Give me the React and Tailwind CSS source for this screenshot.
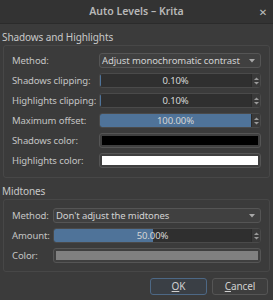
import React from "react";

const font = { fontFamily: '"Noto Sans", "DejaVu Sans", sans-serif' };

const SpinArrows = () => (
  <div className="flex h-full w-[9px] flex-col items-center justify-center border-l border-[#2a2a2a] bg-[#3a3a3a]">
    <svg width="7" height="10" viewBox="0 0 7 10">
      <path d="M1 4 L3.5 1.5 L6 4 Z" fill="#9a9a9a" />
      <path d="M1 6 L3.5 8.5 L6 6 Z" fill="#9a9a9a" />
    </svg>
  </div>
);

const Combo = ({ text }) => (
  <div className="flex h-[15px] flex-1 items-center justify-between rounded-[3px] border border-[#555555] bg-[#404040] pl-[2px] pr-[5px] text-[#d2d2d2]">
    <span className="whitespace-nowrap leading-none">{text}</span>
    <svg width="6" height="4" viewBox="0 0 6 4">
      <path d="M0 0 L6 0 L3 3.5 Z" fill="#a8a8a8" />
    </svg>
  </div>
);

const Spin = ({ text, fill }) => (
  <div className="flex h-[15px] flex-1 overflow-hidden rounded-[3px] border border-[#4a4a4a] bg-[#2f2f2f]">
    <div className="relative flex-1">
      {fill > 0 && (
        <div
          className="absolute inset-y-0 left-0 bg-[#4f7399]"
          style={{ width: `${fill}%` }}
        />
      )}
      {fill === 0 && (
        <div className="absolute inset-y-[1px] left-0 w-[1px] bg-[#4f7399]" />
      )}
      <div className="relative flex h-full items-center justify-center whitespace-nowrap leading-none text-[#d6d6d6]">
        {text}
      </div>
    </div>
    <SpinArrows />
  </div>
);

const Swatch = ({ color }) => (
  <div className="flex h-[15px] flex-1 rounded-[3px] border border-[#555555] bg-[#3f3f3f] p-[2px]">
    <div className="flex-1" style={{ background: color }} />
  </div>
);

const Row = ({ label, labelW, children }) => (
  <div className="flex h-[15px] items-center">
    <div
      className="shrink-0 whitespace-nowrap leading-none text-[#c4c4c4]"
      style={{ width: labelW }}
    >
      {label}
    </div>
    {children}
  </div>
);

export default function App() {
  return (
    <div
      className="flex h-[300px] w-[273px] flex-col overflow-hidden bg-[#3b3b3b] text-[9.5px] tracking-[-0.1px]"
      style={font}
    >
      <div className="relative flex h-[24px] shrink-0 items-center justify-center border-b border-[#2b2b2b] bg-[#333333]">
        <span className="text-[10.5px] font-semibold tracking-normal text-[#b8b8b8]">
          Auto Levels – Krita
        </span>
        <span className="absolute right-[6px] top-[5px] text-[10px] text-[#c0c0c0]">
          ✕
        </span>
      </div>

      <div className="flex h-[21px] items-center pl-[2px] pt-[5px] text-[10px] text-[#c8c8c8]">
        Shadows and Highlights
      </div>
      <div className="mx-[3px] flex flex-col gap-[5px] rounded-[3px] border border-[#474747] pb-[9px] pl-[8px] pr-[8px] pt-[7px]">
        <Row label="Method:" labelW={87}>
          <Combo text="Adjust monochromatic contrast" />
        </Row>
        <Row label="Shadows clipping:" labelW={87}>
          <Spin text="0.10%" fill={0} />
        </Row>
        <Row label="Highlights clipping:" labelW={87}>
          <Spin text="0.10%" fill={0} />
        </Row>
        <Row label="Maximum offset:" labelW={87}>
          <Spin text="100.00%" fill={100} />
        </Row>
        <Row label="Shadows color:" labelW={87}>
          <Swatch color="#000000" />
        </Row>
        <Row label="Highlights color:" labelW={87}>
          <Swatch color="#ffffff" />
        </Row>
      </div>

      <div className="flex h-[20px] items-center pl-[2px] pt-[6px] text-[10px] text-[#c8c8c8]">
        Midtones
      </div>
      <div className="mx-[3px] mt-[1px] flex flex-col gap-[5px] rounded-[3px] border border-[#474747] pb-[8px] pl-[8px] pr-[8px] pt-[8px]">
        <Row label="Method:" labelW={41}>
          <Combo text="Don't adjust the midtones" />
        </Row>
        <Row label="Amount:" labelW={41}>
          <Spin text="50.00%" fill={50} />
        </Row>
        <Row label="Color:" labelW={41}>
          <Swatch color="#808080" />
        </Row>
      </div>

      <div className="mt-[6px] flex justify-end gap-[5px] pr-[5px] text-[10px]">
        <div className="flex h-[17px] w-[57px] items-center justify-center rounded-[3px] border border-[#4d6885] bg-[#3a3f45] text-[#d0d0d0]">
          <span>
            <span className="underline">O</span>K
          </span>
        </div>
        <div className="flex h-[17px] w-[56px] items-center justify-center rounded-[3px] border border-[#555555] bg-[#3e3e3e] text-[#d0d0d0]">
          <span>
            <span className="underline">C</span>ancel
          </span>
        </div>
      </div>
    </div>
  );
}
